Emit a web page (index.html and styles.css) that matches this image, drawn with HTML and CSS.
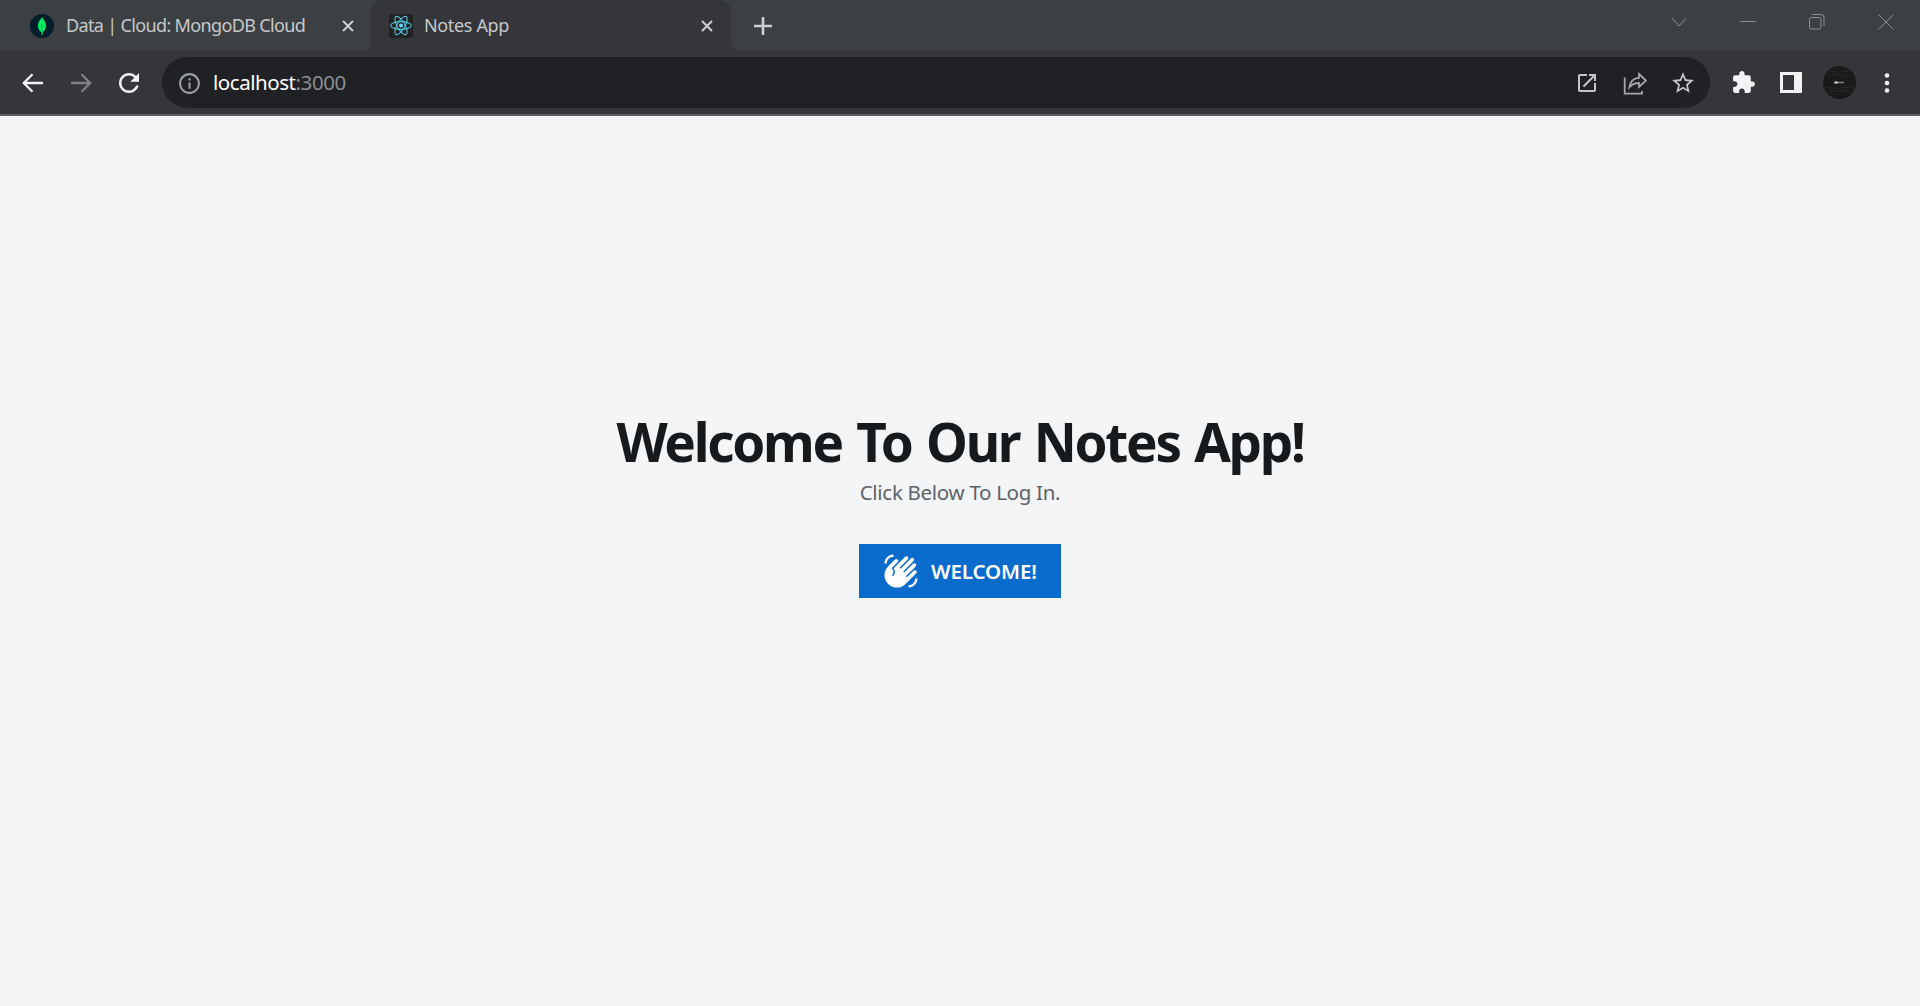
FILE: index.html
```html
<!DOCTYPE html>
<html lang="en">
<head>
<meta charset="utf-8">
<title>Notes App</title>
<link rel="stylesheet" href="styles.css">
</head>
<body>
<header class="browser">
  <div class="tabstrip">
    <div class="tab tab-idle">
      <svg class="favicon" viewBox="0 0 24 24"><circle cx="12" cy="12" r="12" fill="#021e2b"/><path d="M12 3.200C13.200 5.300 16 7.300 16 12c0 3-1.700 5-3.300 6.200L12.400 21h-.8l-.3-2.800C9.700 17 8 15 8 12c0-4.700 2.800-6.700 4-8.800z" fill="#00ed64"/><path d="M12 10v11" stroke="#08a34b" stroke-width=".8"/></svg>
      <span class="tab-title title-mongo">Data | Cloud: MongoDB Cloud</span>
      <svg class="tab-close" viewBox="0 0 14 14"><path d="M2 2l10 10M12 2L2 12"/></svg>
    </div>
    <div class="tab tab-active">
      <svg class="favicon" viewBox="0 0 24 24"><rect width="24" height="24" rx="2.500" fill="#222"/><g fill="none" stroke="#55c3df" stroke-width="1.100"><ellipse cx="12" cy="11.500" rx="10.300" ry="3.900"/><ellipse cx="12" cy="11.500" rx="10.300" ry="3.900" transform="rotate(60 12 11.500)"/><ellipse cx="12" cy="11.500" rx="10.300" ry="3.900" transform="rotate(120 12 11.500)"/></g><circle cx="12" cy="11.500" r="2" fill="#61dafb"/></svg>
      <span class="tab-title title-notes">Notes App</span>
      <svg class="tab-close" viewBox="0 0 14 14"><path d="M2 2l10 10M12 2L2 12"/></svg>
    </div>
    <svg class="new-tab" viewBox="0 0 20 20"><path d="M10 1v18M1 10h18"/></svg>
    <div class="window-controls">
      <svg viewBox="0 0 16 16"><path d="M.8 4L8 12l7.200-8"/></svg>
      <svg viewBox="0 0 16 16"><path d="M.5 7.500h15"/></svg>
      <svg viewBox="0 0 16 16"><rect x=".5" y="3.500" width="11.500" height="11.500" rx="2"/><path d="M3.500 .5h8.500a3 3 0 0 1 3 3v8.500"/></svg>
      <svg viewBox="0 0 16 16"><path d="M.5 .5l15 15M15.500 .5l-15 15"/></svg>
    </div>
  </div>
  <div class="toolbar">
    <svg class="nav" viewBox="0 0 24 24"><path d="M22 12H3M11.500 3.200L2.800 12l8.700 8.800"/></svg>
    <svg class="nav nav-off" viewBox="0 0 24 24"><path d="M2 12h19M12.500 3.200l8.700 8.800-8.700 8.800"/></svg>
    <svg class="reload" viewBox="0 0 24 24"><path d="M17.650 6.350C16.200 4.900 14.210 4 12 4c-4.420 0-7.990 3.580-7.990 8s3.570 8 7.990 8c3.730 0 6.840-2.550 7.730-6h-2.080c-.82 2.330-3.040 4-5.650 4-3.310 0-6-2.690-6-6s2.690-6 6-6c1.660 0 3.140.69 4.220 1.780L13 11h7V4l-2.350 2.350z"/></svg>
    <div class="omnibox">
      <svg class="info" viewBox="0 0 24 24"><path d="M11 7h2v2h-2zm0 4h2v6h-2zm1-9C6.480 2 2 6.480 2 12s4.480 10 10 10 10-4.480 10-10S17.520 2 12 2zm0 18c-4.410 0-8-3.590-8-8s3.590-8 8-8 8 3.590 8 8-3.590 8-8 8z"/></svg>
      <span class="url">localhost<span class="port">:3000</span></span>
      <div class="page-actions">
        <svg viewBox="0 0 24 24"><path d="M19 19H5V5h7V3H5c-1.110 0-2 .9-2 2v14c0 1.100.89 2 2 2h14c1.100 0 2-.9 2-2v-7h-2v7zM14 3v2h3.590l-9.830 9.830 1.410 1.410L19 6.410V10h2V3h-7z"/></svg>
        <svg class="share" viewBox="0 0 24 24"><path d="M1.700 6.500v16.200h17.300V20"/><path d="M16 3l7 6.500-7 6.500v-4c-4 0-7 1-9.500 4.200C7.200 10.500 10.500 7 16 6.800z"/></svg>
        <svg class="star" viewBox="0 0 24 24"><path d="M22 9.240l-7.190-.62L12 2 9.190 8.630 2 9.240l5.460 4.730L5.820 21 12 17.270 18.180 21l-1.630-7.030L22 9.240zM12 15.400l-3.760 2.270 1-4.280-3.320-2.880 4.380-.38L12 6.100l1.710 4.040 4.380.38-3.320 2.880 1 4.280L12 15.400z"/></svg>
      </div>
    </div>
    <svg class="puzzle" viewBox="0 0 24 24"><path d="M20.500 11H19V7c0-1.100-.9-2-2-2h-4V3.500C13 2.120 11.880 1 10.500 1S8 2.120 8 3.500V5H4c-1.100 0-1.990.9-1.990 2v3.800H3.500c1.490 0 2.700 1.210 2.700 2.700s-1.210 2.700-2.700 2.700H2V20c0 1.100.9 2 2 2h3.800v-1.500c0-1.490 1.210-2.700 2.700-2.700 1.490 0 2.700 1.210 2.700 2.700V22H17c1.100 0 2-.9 2-2v-4h1.500c1.380 0 2.500-1.120 2.500-2.500S21.880 11 20.500 11z"/></svg>
    <svg class="panel" viewBox="0 0 22 21"><path d="M0 0h22v21H0zM3 3v15h11V3z" fill-rule="evenodd"/></svg>
    <svg class="avatar" viewBox="0 0 33 33"><circle cx="16.500" cy="16.500" r="16.500" fill="#191919"/><path d="M6 5q8 2 21 0M3 10q12-3 27 1M2 21q12 3 29-1M5 26q11-3 23 0" fill="none" stroke="#282828"/><path d="M11.500 16.500h9.500" stroke="#888" stroke-width="1.500"/><path d="M11.500 16.500h3" stroke="#ddd" stroke-width="2"/></svg>
    <svg class="dots" viewBox="0 0 6 20"><circle cx="3" cy="2.500" r="2.300"/><circle cx="3" cy="10" r="2.300"/><circle cx="3" cy="17.500" r="2.300"/></svg>
  </div>
</header>
<main class="welcome">
  <h1 class="heading">Welcome To Our Notes App!</h1>
  <p class="subtitle">Click Below To Log In.</p>
  <button class="login">
    <svg class="wave" viewBox="0 0 24 24"><path d="M23 17c0 3.310-2.690 6-6 6v-1.500c2.480 0 4.500-2.020 4.500-4.500H23zM1 7c0-3.310 2.690-6 6-6v1.500C4.520 2.500 2.500 4.520 2.500 7H1zm7.010-2.680-4.600 4.600c-3.220 3.220-3.220 8.450 0 11.670s8.450 3.220 11.670 0l7.070-7.070c.49-.49.49-1.280 0-1.770s-1.280-.49-1.770 0l-4.420 4.420-.71-.71 6.540-6.540c.49-.49.49-1.280 0-1.770s-1.280-.49-1.770 0l-5.830 5.830-.71-.71 6.890-6.890c.49-.49.49-1.280 0-1.770s-1.280-.49-1.770 0l-6.890 6.890-.7-.7 5.500-5.500c.49-.49.49-1.280 0-1.770s-1.280-.49-1.770 0l-7.620 7.620c1.220 1.570 1.110 3.840-.33 5.280l-.71-.71c1.170-1.170 1.170-3.070 0-4.240l-.35-.35 4.070-4.070c.49-.49.49-1.280 0-1.770-.5-.48-1.290-.48-1.780.01z"/></svg>
    <span class="login-label">WELCOME!</span>
  </button>
</main>
</body>
</html>
```
FILE: styles.css
```css
* { box-sizing: border-box; }
body {
  margin: 0;
  height: 1006px;
  overflow: hidden;
  display: flex;
  flex-direction: column;
  background: #f3f5f7;
  font-family: "Segoe UI", "Noto Sans", "Open Sans", sans-serif;
}
svg { display: block; flex: none; }
.browser { flex: none; height: 116px; background: #35363a; border-bottom: 2px solid #5e5f63; }
.tabstrip { display: flex; height: 51px; background: #3c4043; }
.tab { display: flex; align-items: center; height: 51px; white-space: nowrap; }
.tab-idle { width: 371px; padding: 0 16px 0 30px; border-bottom-right-radius: 9px; background: #3c4043; box-shadow: 9px 9px 0 #35363a; clip-path: inset(0 -9px 0 0); }
.tab-active { width: 360px; padding: 0 17px 0 18px; background: #35363a; border-radius: 12px 12px 0 0; z-index: 1; }
/* Flared foot on the right of the selected tab */
.tab-active::after {
  content: "";
  align-self: flex-end;
  width: 9px;
  height: 9px;
  margin-right: -26px;
  margin-left: 17px;
  background: radial-gradient(circle at 100% 0, #3c4043 8.500px, #35363a 9px);
}
.favicon { width: 24px; height: 24px; margin-top: 1px; }
.tab-title { font-size: 18px; line-height: 24px; color: #c6c8ca; margin: -2px 0 0 12px; }
.title-mongo { letter-spacing: -0.650px; }
.title-notes { margin-left: 11px; letter-spacing: -0.350px; }
.tab-close { width: 14px; height: 14px; margin-left: auto; stroke: #cdcfd1; stroke-width: 2; }
.new-tab { width: 20px; height: 20px; margin: 15.500px 0 0 22px; stroke: #cdcfd1; stroke-width: 2.600; }
.window-controls { display: flex; gap: 53px; margin: 14px 26px 0 auto; }
.window-controls svg { width: 16px; height: 16px; fill: none; stroke: #8c8f91; stroke-width: 1; }
.toolbar { display: flex; align-items: center; height: 63px; padding: 0 30px 0 21px; }
.nav { width: 24px; height: 24px; margin-right: 24px; fill: none; stroke: #f1f3f4; stroke-width: 2.300; }
.nav-off { stroke: #808185; }
.reload { width: 30px; height: 30px; margin: 0 18px 0 -3px; fill: #f1f3f4; }
.omnibox { display: flex; align-items: center; width: 1548px; height: 51px; padding: 0 14px 0 15px; border-radius: 26px; background: #202124; }
.info { width: 25px; height: 25px; margin-top: 2px; fill: #9aa0a6; }
.url { margin: -2px 0 0 11px; font-size: 20.500px; line-height: 28px; letter-spacing: -0.450px; color: #fff; }
.port { color: #8b8f93; }
.page-actions { display: flex; align-items: center; gap: 24px; margin-left: auto; }
.page-actions svg { width: 24px; height: 24px; fill: #c4c5c7; }
.page-actions .share { fill: none; stroke: #a5a6a8; stroke-width: 1.800; }
.page-actions .star { width: 26px; height: 26px; margin-left: -1px; }
.puzzle { width: 25px; height: 25px; margin-left: 21px; fill: #f1f3f4; }
.panel { width: 22px; height: 21px; margin-left: 24px; fill: #f1f3f4; }
.avatar { width: 33px; height: 33px; margin-left: 21px; }
.dots { width: 6px; height: 20px; margin-left: 28px; fill: #f1f3f4; }
.welcome { display: flex; flex-direction: column; align-items: center; padding-top: 291px; }
.heading { margin: 0; font-size: 53px; line-height: 70px; font-weight: 700; letter-spacing: -2.300px; word-spacing: 3px; color: #171a1c; white-space: nowrap; }
.subtitle { margin: 0; font-size: 20.500px; line-height: 30px; letter-spacing: -0.300px; color: #5c6368; white-space: nowrap; }
.login { display: flex; align-items: center; width: 202px; height: 54px; margin: 37px 0 0; padding: 0 0 0 24px; border: 0; background: #096bcb; color: #fff; font-family: inherit; }
.wave { width: 36px; height: 36px; fill: #fff; }
.login-label { margin-left: 12px; font-size: 20.500px; line-height: 30px; font-weight: 600; letter-spacing: -0.100px; }
```
